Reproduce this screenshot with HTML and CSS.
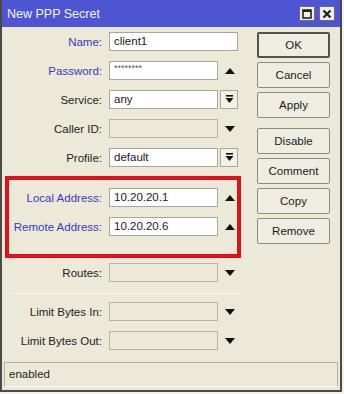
FILE: index.html
```html
<!DOCTYPE html>
<html lang="en">

<head>
    <meta charset="UTF-8">
    <title>New PPP Secret</title>
    <link rel="stylesheet" href="styles.css">
</head>

<body>
    <div class="window">
        <div class="titlebar">
            <span class="title">New PPP Secret</span>
            <div class="win_btns">
                <span class="win_btn"><svg width="10" height="10" viewBox="0 0 10 10"><rect x="1" y="1" width="8" height="8" fill="none" stroke="#222" stroke-width="1.6"/><line x1="1" y1="2" x2="9" y2="2" stroke="#222" stroke-width="2"/></svg></span>
                <span class="win_btn"><svg width="10" height="10" viewBox="0 0 10 10"><path d="M1.5 1.5 L8.5 8.5 M8.5 1.5 L1.5 8.5" stroke="#222" stroke-width="2.2"/></svg></span>
            </div>
        </div>

        <div class="content">
            <div class="form">
                <div class="row">
                    <label class="label blue">Name:</label>
                    <div class="field wide">client1</div>
                </div>
                <div class="row">
                    <label class="label blue">Password:</label>
                    <div class="field pass">********</div>
                    <span class="arrow up"></span>
                </div>
                <div class="row">
                    <label class="label">Service:</label>
                    <div class="field">any</div>
                    <span class="drop"><svg width="9" height="9" viewBox="0 0 9 9"><rect x="1" y="0" width="7" height="1.6" fill="#111"/><path d="M0.5 3 H8.5 L4.5 8 Z" fill="#111"/></svg></span>
                </div>
                <div class="row">
                    <label class="label">Caller ID:</label>
                    <div class="field off"></div>
                    <span class="arrow down"></span>
                </div>
                <div class="row">
                    <label class="label">Profile:</label>
                    <div class="field">default</div>
                    <span class="drop"><svg width="9" height="9" viewBox="0 0 9 9"><rect x="1" y="0" width="7" height="1.6" fill="#111"/><path d="M0.5 3 H8.5 L4.5 8 Z" fill="#111"/></svg></span>
                </div>

                <div class="highlight">
                    <div class="row">
                        <label class="label blue">Local Address:</label>
                        <div class="field">10.20.20.1</div>
                        <span class="arrow up"></span>
                    </div>
                    <div class="row">
                        <label class="label blue">Remote Address:</label>
                        <div class="field">10.20.20.6</div>
                        <span class="arrow up"></span>
                    </div>
                </div>

                <div class="row routes">
                    <label class="label">Routes:</label>
                    <div class="field off"></div>
                    <span class="arrow down"></span>
                </div>
                <div class="separator"></div>
                <div class="row">
                    <label class="label">Limit Bytes In:</label>
                    <div class="field off"></div>
                    <span class="arrow down"></span>
                </div>
                <div class="row">
                    <label class="label">Limit Bytes Out:</label>
                    <div class="field off"></div>
                    <span class="arrow down"></span>
                </div>
            </div>

            <div class="buttons">
                <button class="btn default">OK</button>
                <button class="btn">Cancel</button>
                <button class="btn">Apply</button>
                <button class="btn group">Disable</button>
                <button class="btn">Comment</button>
                <button class="btn">Copy</button>
                <button class="btn">Remove</button>
            </div>
        </div>

        <div class="statusbar">enabled</div>
    </div>
</body>

</html>
```

FILE: styles.css
```css
* {
    margin: 0;
    padding: 0;
    box-sizing: border-box;
}

body {
    background-color: #f3f2ee;
    font-family: 'Liberation Sans', Arial, sans-serif;
    font-size: 11.5px;
    color: #222;
}

.window {
    width: 342px;
    height: 392px;
    background-color: #ece9d8;
    border-left: 2px solid #4a4a48;
    border-right: 2px solid #4a4a48;
    border-bottom: 2px solid #4a4a48;
    display: flex;
    flex-direction: column;
}

.titlebar {
    height: 27px;
    background-color: #4d55d2;
    display: flex;
    align-items: center;
    justify-content: space-between;
    padding: 0 5px 0 5px;
}

.title {
    color: #f4f4ff;
    font-size: 12.5px;
    padding-top: 1px;
}

.win_btns {
    display: flex;
    gap: 4px;
}

.win_btn {
    width: 16px;
    height: 15px;
    background-color: #f2f0e6;
    border: 1px solid #6a6a80;
    display: flex;
    align-items: center;
    justify-content: center;
}

.content {
    display: flex;
    padding-top: 5px;
}

.form {
    width: 239px;
    display: flex;
    flex-direction: column;
}

.row {
    display: flex;
    align-items: center;
    height: 19px;
    margin-bottom: 10px;
}

.label {
    width: 100px;
    text-align: right;
    margin-right: 7px;
}

.blue {
    color: #3a38c0;
}

.field {
    width: 109px;
    height: 19px;
    background-color: #ffffff;
    border: 1px solid #a9a79c;
    padding: 0 4px;
    line-height: 17px;
    color: #1a1a1a;
}

.field.wide {
    width: 129px;
}

.field.pass {
    font-size: 9px;
    color: #555;
    line-height: 13px;
}

.field.off {
    background-color: #ece9d8;
    border-color: #b8b5a6;
}

.arrow {
    width: 0;
    height: 0;
    margin-left: 7px;
    border-left: 5px solid transparent;
    border-right: 5px solid transparent;
}

.arrow.up {
    border-bottom: 6px solid #111;
}

.arrow.down {
    border-top: 6px solid #111;
}

.drop {
    width: 18px;
    height: 19px;
    margin-left: 2px;
    border: 1px solid #a9a79c;
    background-color: #f3f1e8;
    display: flex;
    align-items: center;
    justify-content: center;
}

.highlight {
    margin: -1px 0 0 3px;
    width: 236px;
    border: 4px solid #e01018;
    padding: 8px 0 8px 0;
}

.highlight .label {
    width: 93px;
}

.routes {
    margin-top: 5px;
}

.separator {
    height: 1px;
    background-color: #d4d1c2;
    border-bottom: 1px solid #faf9f4;
    margin: 1px 0 8px 10px;
    width: 228px;
}

.buttons {
    margin-left: 16px;
    display: flex;
    flex-direction: column;
    gap: 4px;
}

.btn {
    width: 73px;
    height: 26px;
    background-color: #efede2;
    border: 1px solid #8e8c80;
    border-radius: 2px;
    font-family: 'Liberation Sans', Arial, sans-serif;
    font-size: 11.5px;
    color: #1a1a1a;
}

.btn.default {
    border: 2px solid #555550;
}

.btn.group {
    margin-top: 6px;
}

.statusbar {
    margin: auto 2px 3px 2px;
    height: 25px;
    border: 1px solid #b3b0a2;
    border-bottom-color: #f8f7f0;
    padding: 0 4px;
    line-height: 23px;
}
```
